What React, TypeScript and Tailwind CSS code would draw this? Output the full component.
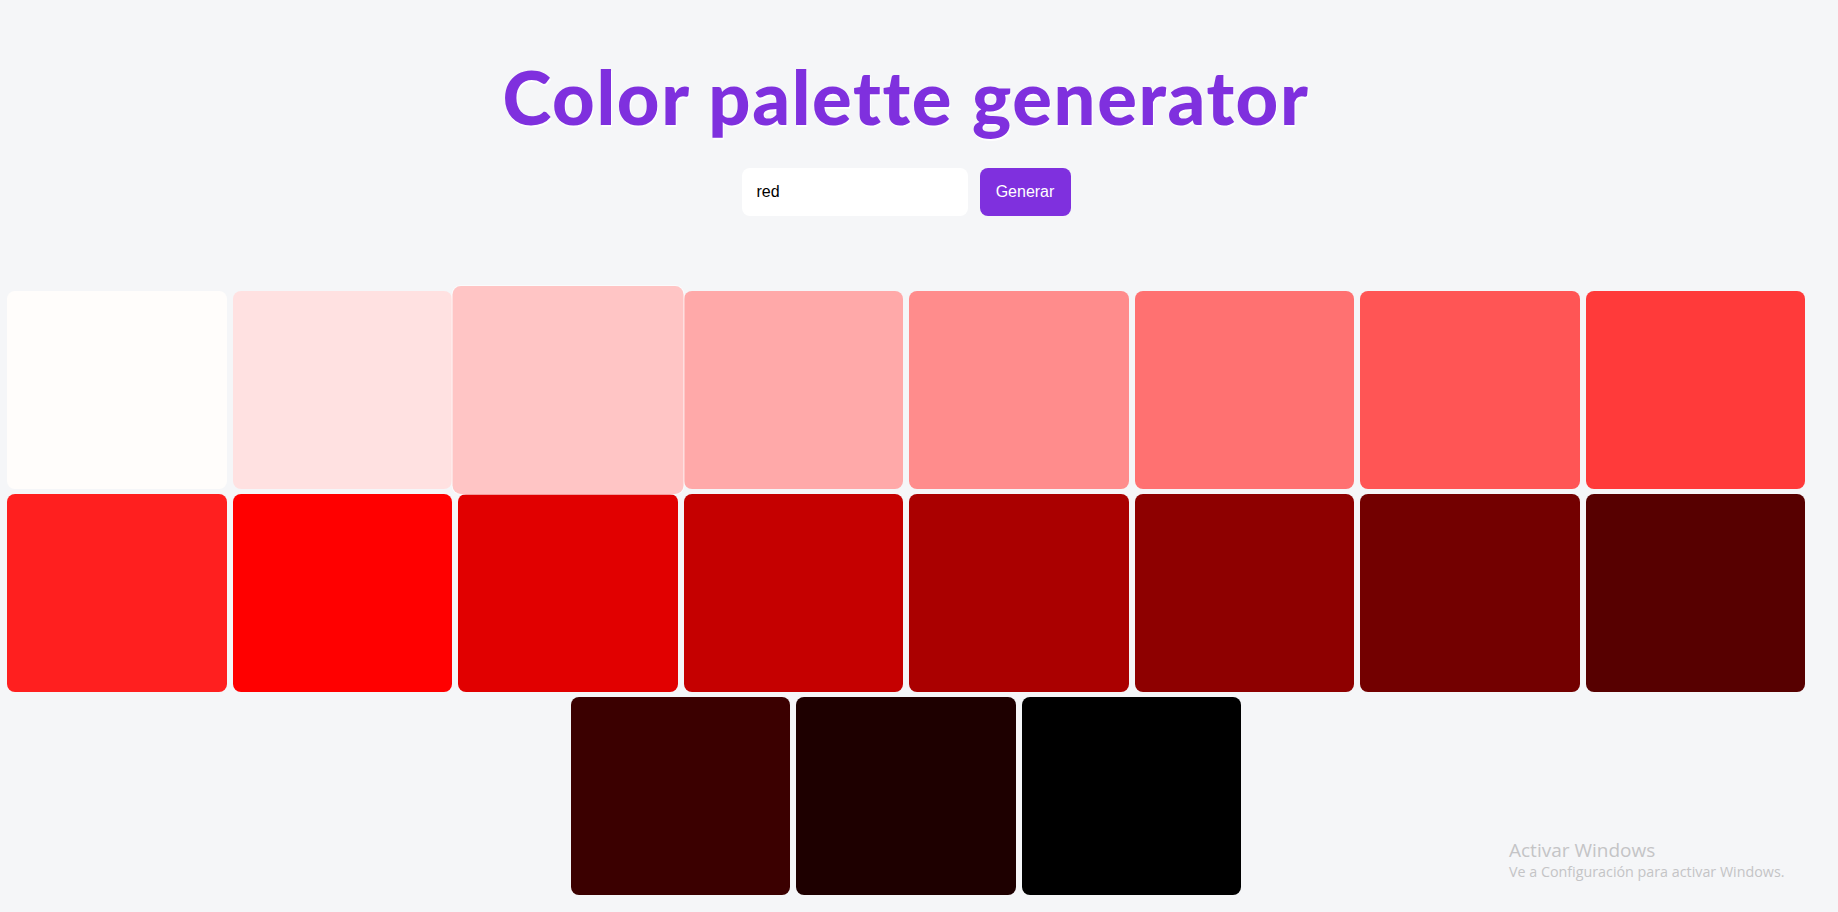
import React from "react";

const row1 = ["#fffdfb", "#ffe1e1", "#ffc5c5", "#ffa9a9", "#ff8c8c", "#ff7171", "#ff5555", "#ff3a3a"];
const row2 = ["#ff1f1f", "#ff0000", "#e10000", "#c50000", "#aa0000", "#8e0000", "#730000", "#570000"];
const row3 = ["#3b0000", "#1e0000", "#000000"];

export default function App() {
  const colors = [...row1, ...row2, ...row3];
  return (
    <div className="w-full min-h-[912px] bg-[#f5f6f8] relative overflow-hidden">
      <div className="w-[1812px] flex flex-col items-center">
        <h1 className="mt-[60px] text-[74px] leading-[74px] tracking-[1.6px] font-black text-[#7f30de] font-['Lato',sans-serif] [text-shadow:1px_2px_0_rgba(255,255,255,0.9)]">
          Color palette generator
        </h1>
        <div className="mt-[34px] flex gap-[12px] font-['Liberation_Sans',Arial,sans-serif]">
          <input
            defaultValue="red"
            className="w-[226px] h-[48px] rounded-lg bg-white px-[15px] text-[16px] text-black outline-none"
          />
          <button className="w-[91px] h-[48px] rounded-lg bg-[#7f30de] text-white text-[16px]">
            Generar
          </button>
        </div>
        <div className="mt-[75px] flex flex-wrap justify-center gap-x-[6px] gap-y-[5px] w-full">
          {colors.map((c, i) => (
            <div
              key={i}
              className={
                i === 2
                  ? "w-[219.5px] h-[198px] rounded-lg scale-105 relative z-10 shadow-[0_0_0_1px_rgba(255,255,255,0.6)]"
                  : "w-[219.5px] h-[198px] rounded-lg"
              }
              style={{ backgroundColor: c }}
            />
          ))}
        </div>
      </div>
      <div className="absolute left-[1509px] top-[838px] text-[#c4c4c6] font-['Open_Sans',sans-serif]">
        <div className="text-[19px] leading-[24px]">Activar Windows</div>
        <div className="text-[14.3px] leading-[20px]">Ve a Configuración para activar Windows.</div>
      </div>
    </div>
  );
}
